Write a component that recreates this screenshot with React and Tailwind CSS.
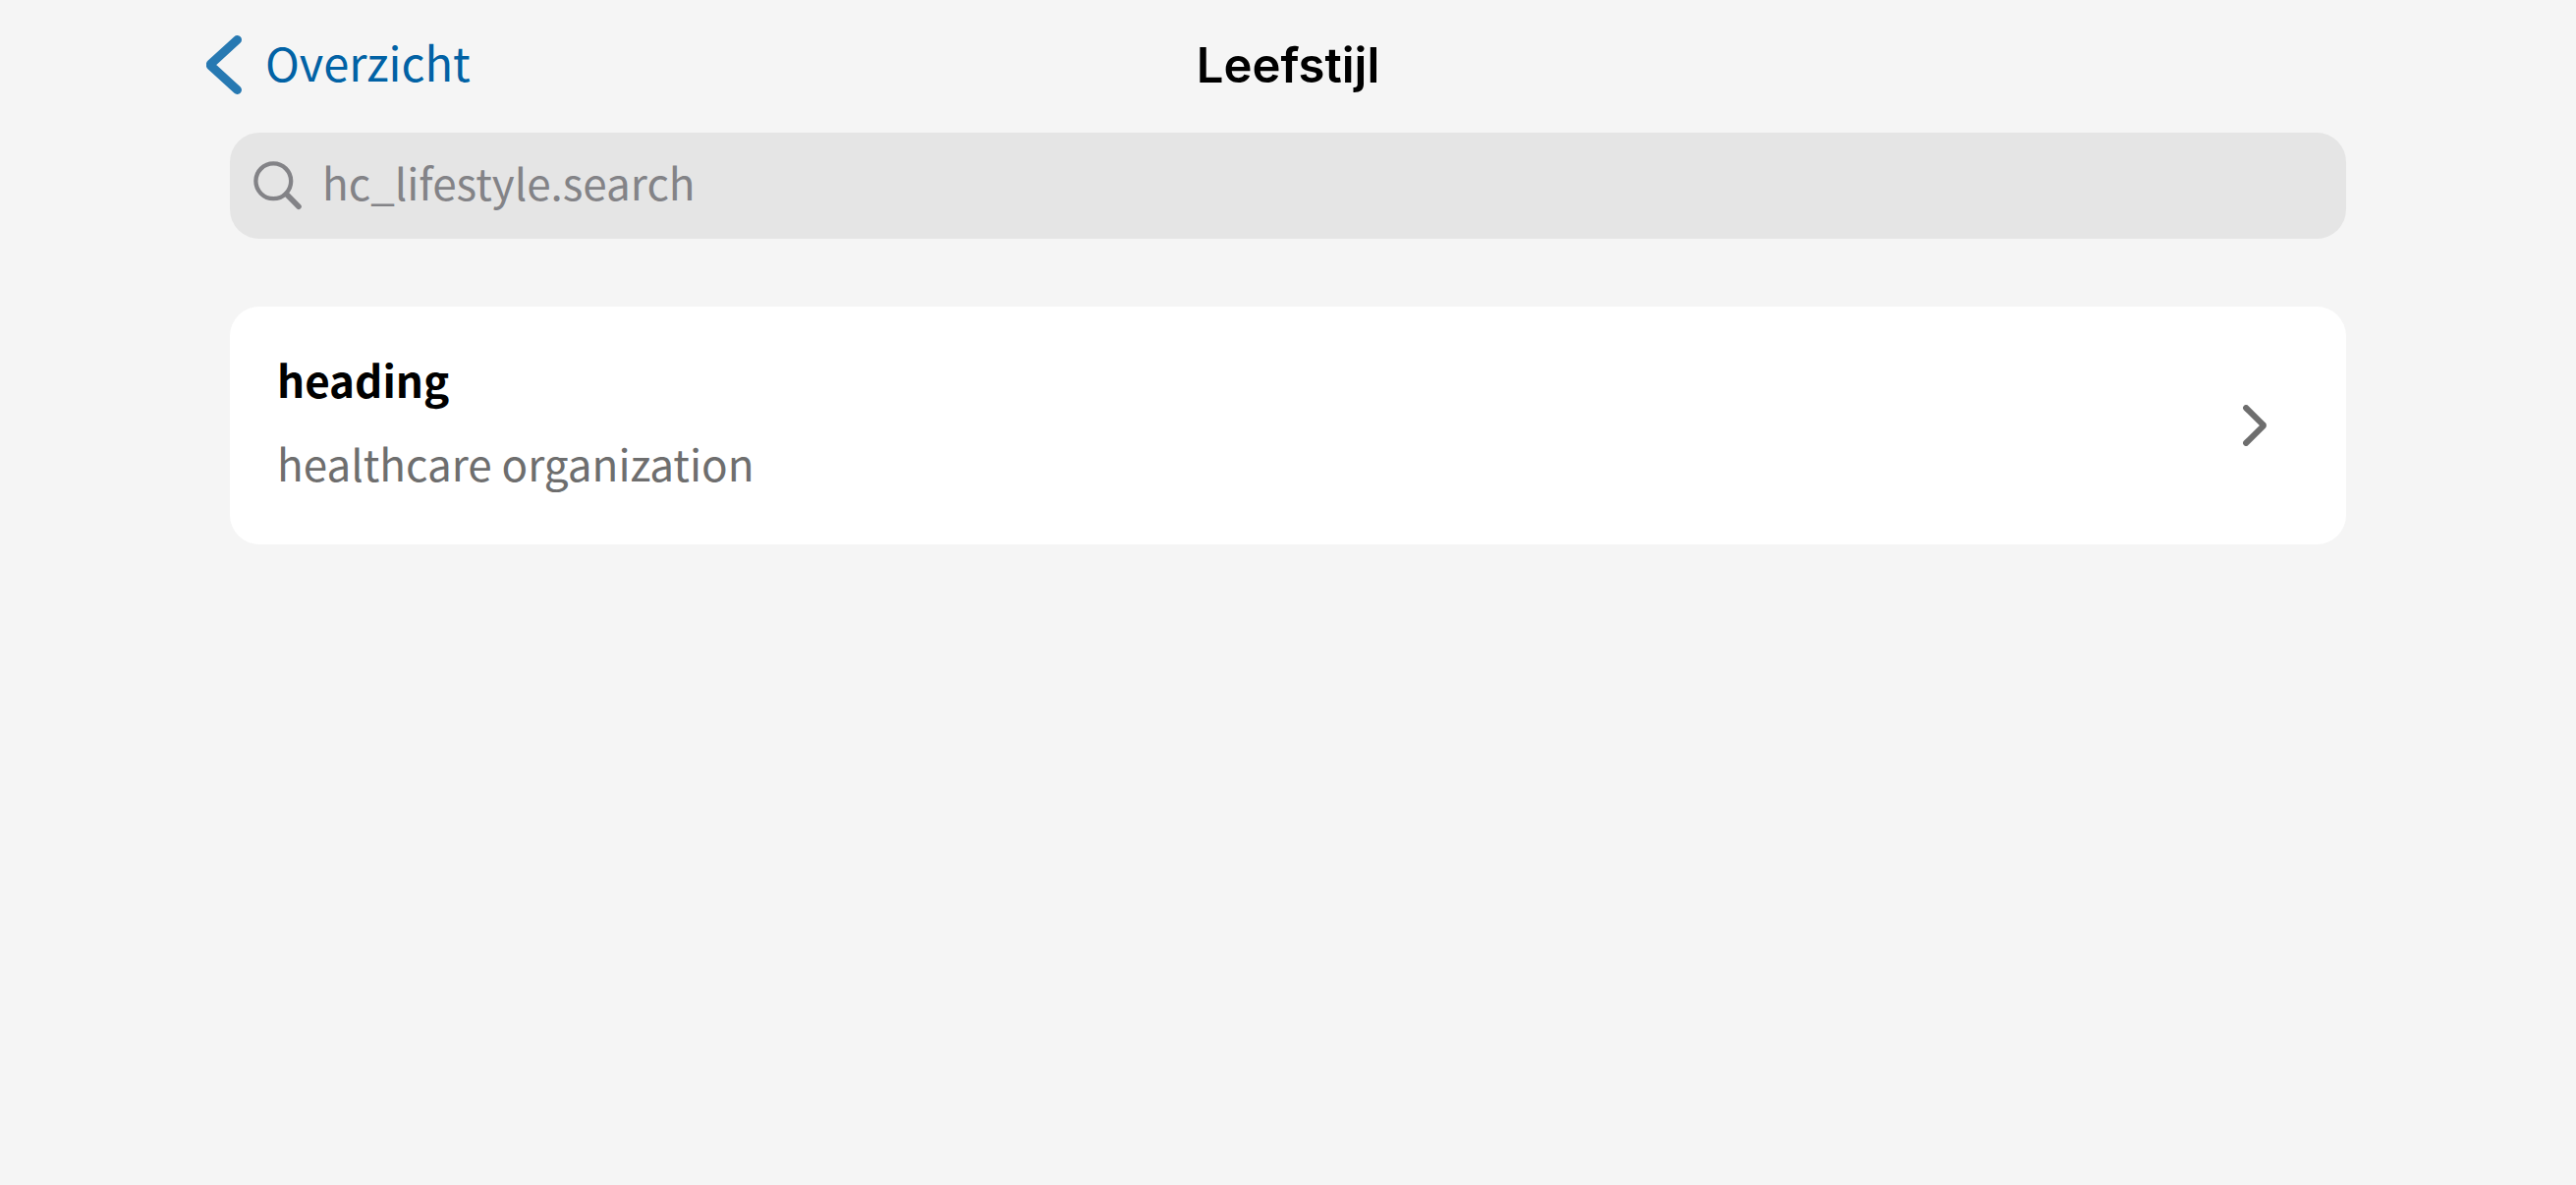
function BackChevron() {
  return (
    <svg className="h-15 w-9 shrink-0" viewBox="0 0 36 60" fill="none" aria-hidden="true">
      <path d="M31.5 4.5 4.8 28.8a1.6 1.6 0 0 0 0 2.4L31.5 55.5" stroke="#2779b2" strokeWidth="9" strokeLinecap="round" strokeLinejoin="round" />
    </svg>
  );
}

function SearchIcon() {
  return (
    <svg className="h-[50px] w-[50px] shrink-0" viewBox="0 0 50 50" fill="none" stroke="#838387" aria-hidden="true">
      <circle cx="20.3" cy="20.3" r="17.9" strokeWidth="4.3" />
      <path d="M33.5 33.5 46 46.2" strokeWidth="5.6" strokeLinecap="round" />
    </svg>
  );
}

function RowChevron() {
  return (
    <svg className="h-[42px] w-6 shrink-0" viewBox="0 0 24 42" fill="none" aria-hidden="true">
      <path d="M3.2 3.2 20.6 20.4a0.8 0.8 0 0 1 0 1.2L3.2 38.8" stroke="#6e6e6e" strokeWidth="6.2" strokeLinecap="round" strokeLinejoin="round" />
    </svg>
  );
}

export default function App() {
  return (
    <div className="min-h-screen bg-[#f5f5f5] font-['Noto_Sans_CJK_SC',sans-serif] text-[44px] leading-[61px] text-black">
      <header className="grid h-33 grid-cols-[1fr_auto_1fr] items-center px-[210px]">
        <a href="#overzicht" className="flex items-center gap-6 justify-self-start text-[47px] text-[#0162a5]">
          <BackChevron />
          <span className="pb-2">Overzicht</span>
        </a>
        <h1 className="font-['Inter',sans-serif] text-[49px] font-semibold">Leefstijl</h1>
      </header>

      <main className="flex flex-col gap-[69px] px-[234px] pt-[3px]">
        <label className="flex h-27 items-center gap-5 rounded-[30px] bg-[#e5e5e5] px-6">
          <SearchIcon />
          <input
            type="search"
            aria-label="hc_lifestyle.search"
            placeholder="hc_lifestyle.search"
            className="h-full min-w-0 flex-1 bg-transparent pb-2 outline-none placeholder:text-[#838387]"
          />
        </label>

        <button type="button" className="flex w-full items-center justify-between rounded-[30px] bg-white pr-[81px] pl-12 text-left">
          <span className="flex flex-col gap-6 pt-11 pb-13">
            <span className="font-bold">heading</span>
            <span className="text-[#6e6e6e]">healthcare organization</span>
          </span>
          <RowChevron />
        </button>
      </main>
    </div>
  );
}
